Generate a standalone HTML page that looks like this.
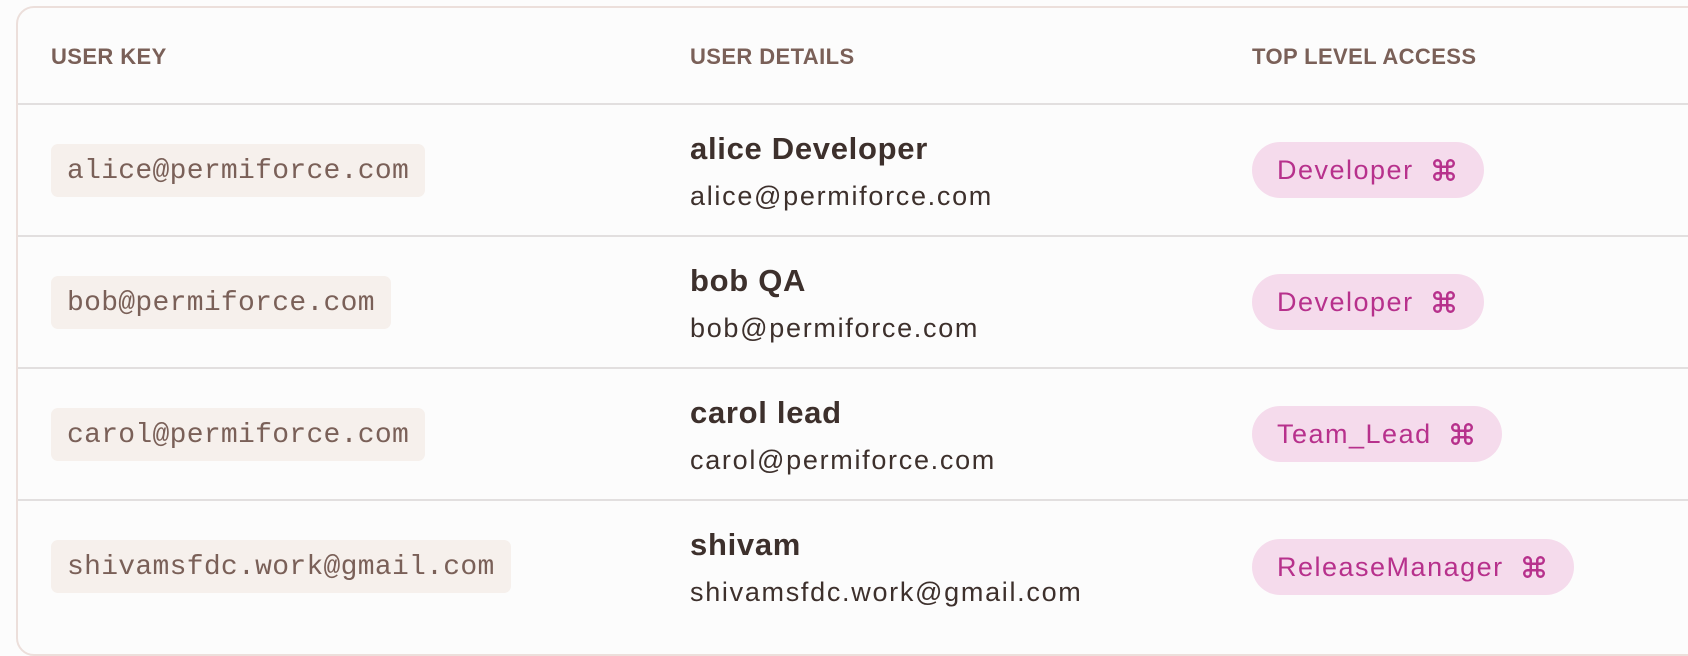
<!DOCTYPE html>
<html><head><meta charset="utf-8"><style>
*{margin:0;padding:0;box-sizing:border-box}
body{width:1688px;height:632px;background:#fcfcfc;font-family:"Liberation Sans",sans-serif;overflow:hidden;position:relative}
.card{position:absolute;left:16px;top:6px;width:1700px;height:650px;border:2px solid #ecdfdb;border-radius:18px;background:#fcfcfc}
.hd{position:absolute;top:44px;font-size:22px;font-weight:bold;color:#7a6058;letter-spacing:0.4px}
.line{position:absolute;left:18px;right:0;height:2px;background:#e2dfdf}
.key{position:absolute;left:51px;height:53px;padding:2px 16px 0;background:#f6f0ec;border-radius:7px;font-family:"Liberation Mono",monospace;font-size:28px;color:#7a6058;line-height:51px;letter-spacing:0.3px}
.name{position:absolute;left:690px;font-size:31px;font-weight:bold;color:#3d302c;letter-spacing:0.7px}
.mail{position:absolute;left:690px;font-size:27px;color:#3d302c;letter-spacing:1.7px}
.pill{position:absolute;left:1252px;height:56px;padding:0 27px 0 25px;background:#f5dbec;border-radius:28px;color:#b7318c;font-size:27px;letter-spacing:1.5px;line-height:56px;display:flex;align-items:center;gap:17px}
.pill svg{width:26px;height:26px}
</style></head><body>
<div class="card"></div>
<div class="hd" style="left:51px">USER KEY</div>
<div class="hd" style="left:690px">USER DETAILS</div>
<div class="hd" style="left:1252px">TOP LEVEL ACCESS</div>
<div class="line" style="top:103px"></div>
<div class="line" style="top:235px"></div>
<div class="line" style="top:367px"></div>
<div class="line" style="top:499px"></div>

<div class="key" style="top:144px">alice@permiforce.com</div>
<div class="name" style="top:131px">alice Developer</div>
<div class="mail" style="top:181px">alice@permiforce.com</div>
<div class="pill" style="top:142px">Developer<svg viewBox="0 0 24 24" fill="none" stroke="#b7318c" stroke-width="2.3"><path d="M15 6v12a3 3 0 1 0 3-3H6a3 3 0 1 0 3 3V6a3 3 0 1 0-3 3h12a3 3 0 1 0-3-3"/></svg></div>

<div class="key" style="top:276px">bob@permiforce.com</div>
<div class="name" style="top:263px">bob QA</div>
<div class="mail" style="top:313px">bob@permiforce.com</div>
<div class="pill" style="top:274px">Developer<svg viewBox="0 0 24 24" fill="none" stroke="#b7318c" stroke-width="2.3"><path d="M15 6v12a3 3 0 1 0 3-3H6a3 3 0 1 0 3 3V6a3 3 0 1 0-3 3h12a3 3 0 1 0-3-3"/></svg></div>

<div class="key" style="top:408px">carol@permiforce.com</div>
<div class="name" style="top:395px">carol lead</div>
<div class="mail" style="top:445px">carol@permiforce.com</div>
<div class="pill" style="top:406px">Team_Lead<svg viewBox="0 0 24 24" fill="none" stroke="#b7318c" stroke-width="2.3"><path d="M15 6v12a3 3 0 1 0 3-3H6a3 3 0 1 0 3 3V6a3 3 0 1 0-3 3h12a3 3 0 1 0-3-3"/></svg></div>

<div class="key" style="top:540px">shivamsfdc.work@gmail.com</div>
<div class="name" style="top:527px">shivam</div>
<div class="mail" style="top:577px">shivamsfdc.work@gmail.com</div>
<div class="pill" style="top:539px">ReleaseManager<svg viewBox="0 0 24 24" fill="none" stroke="#b7318c" stroke-width="2.3"><path d="M15 6v12a3 3 0 1 0 3-3H6a3 3 0 1 0 3 3V6a3 3 0 1 0-3 3h12a3 3 0 1 0-3-3"/></svg></div>
</body></html>
